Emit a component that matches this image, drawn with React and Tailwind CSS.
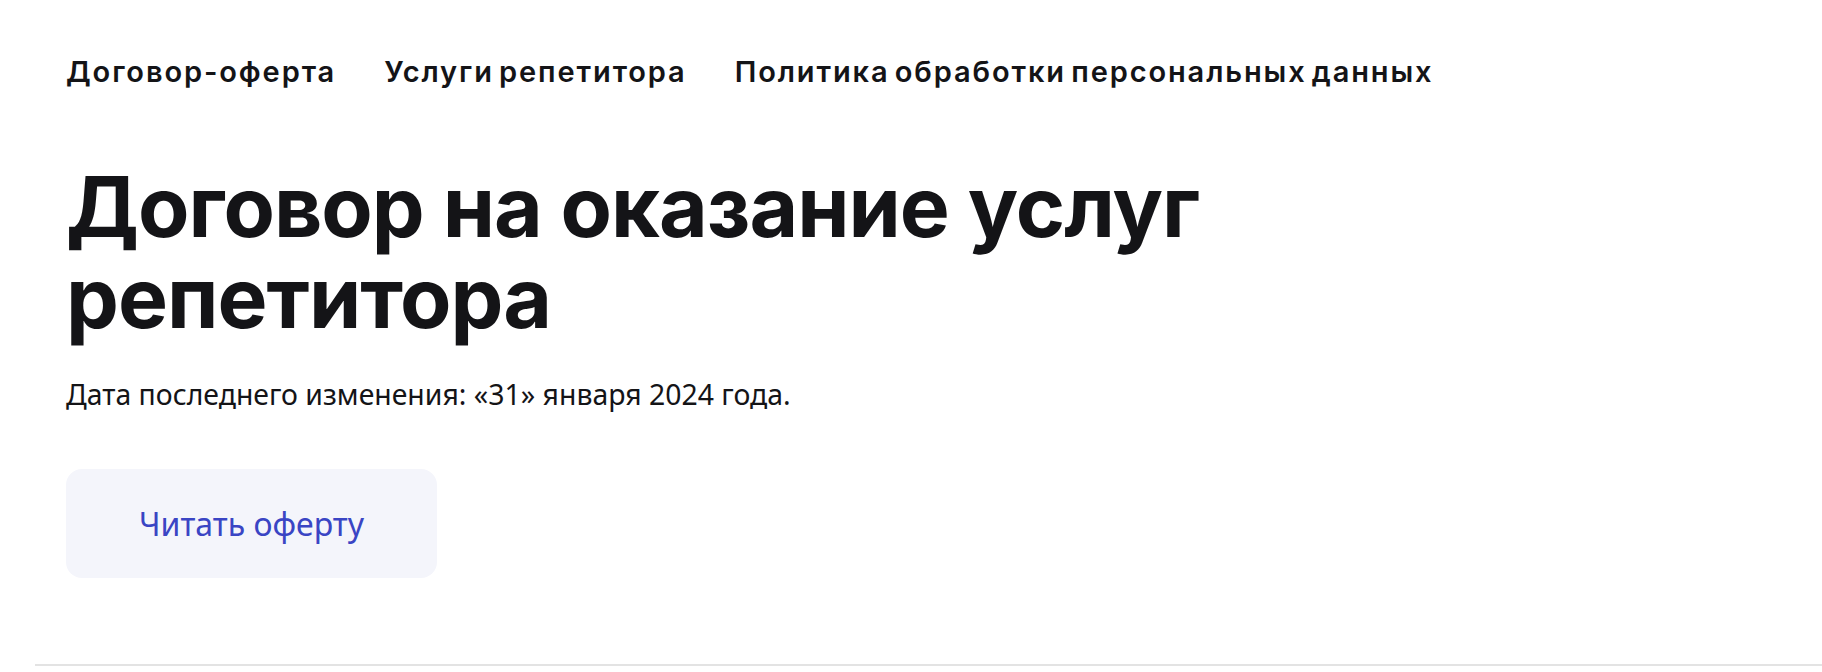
import React from 'react'

const navItems = ['Договор-оферта', 'Услуги репетитора', 'Политика обработки персональных данных']

export default function App() {
  return (
    <div className="min-h-screen bg-white text-[#141417]" style={{ fontFamily: 'Inter, "Noto Sans", sans-serif' }}>
      <div className="pl-[66px] pt-[54px]">
        {/* Top nav */}
        <nav className="flex gap-[48px] text-[29px] font-semibold leading-[36px] tracking-[0.065em] [word-spacing:-4px]">
          {navItems.map(item => (
            <a key={item} href="#" className="whitespace-nowrap">{item}</a>
          ))}
        </nav>

        <h1 className="mt-[71px] text-[84px] font-bold leading-[91px] tracking-[-0.012em]">
          Договор на оказание услуг
          <br />
          репетитора
        </h1>

        <p className="mt-[32px] text-[28.4px] leading-[38px]" style={{ fontFamily: '"Noto Sans", sans-serif' }}>
          Дата последнего изменения: «31» января 2024 года.
        </p>

        <button
          className="mt-[56px] flex h-[109px] w-[371px] items-center justify-center rounded-[16px] bg-[#f4f5fb] text-[32px] text-[#3a45c4]"
          style={{ fontFamily: '"Noto Sans", sans-serif' }}
        >
          Читать оферту
        </button>
      </div>

      <div className="ml-[35px] mt-[86px] h-[2px] bg-[#e3e3e3]" />
    </div>
  )
}
